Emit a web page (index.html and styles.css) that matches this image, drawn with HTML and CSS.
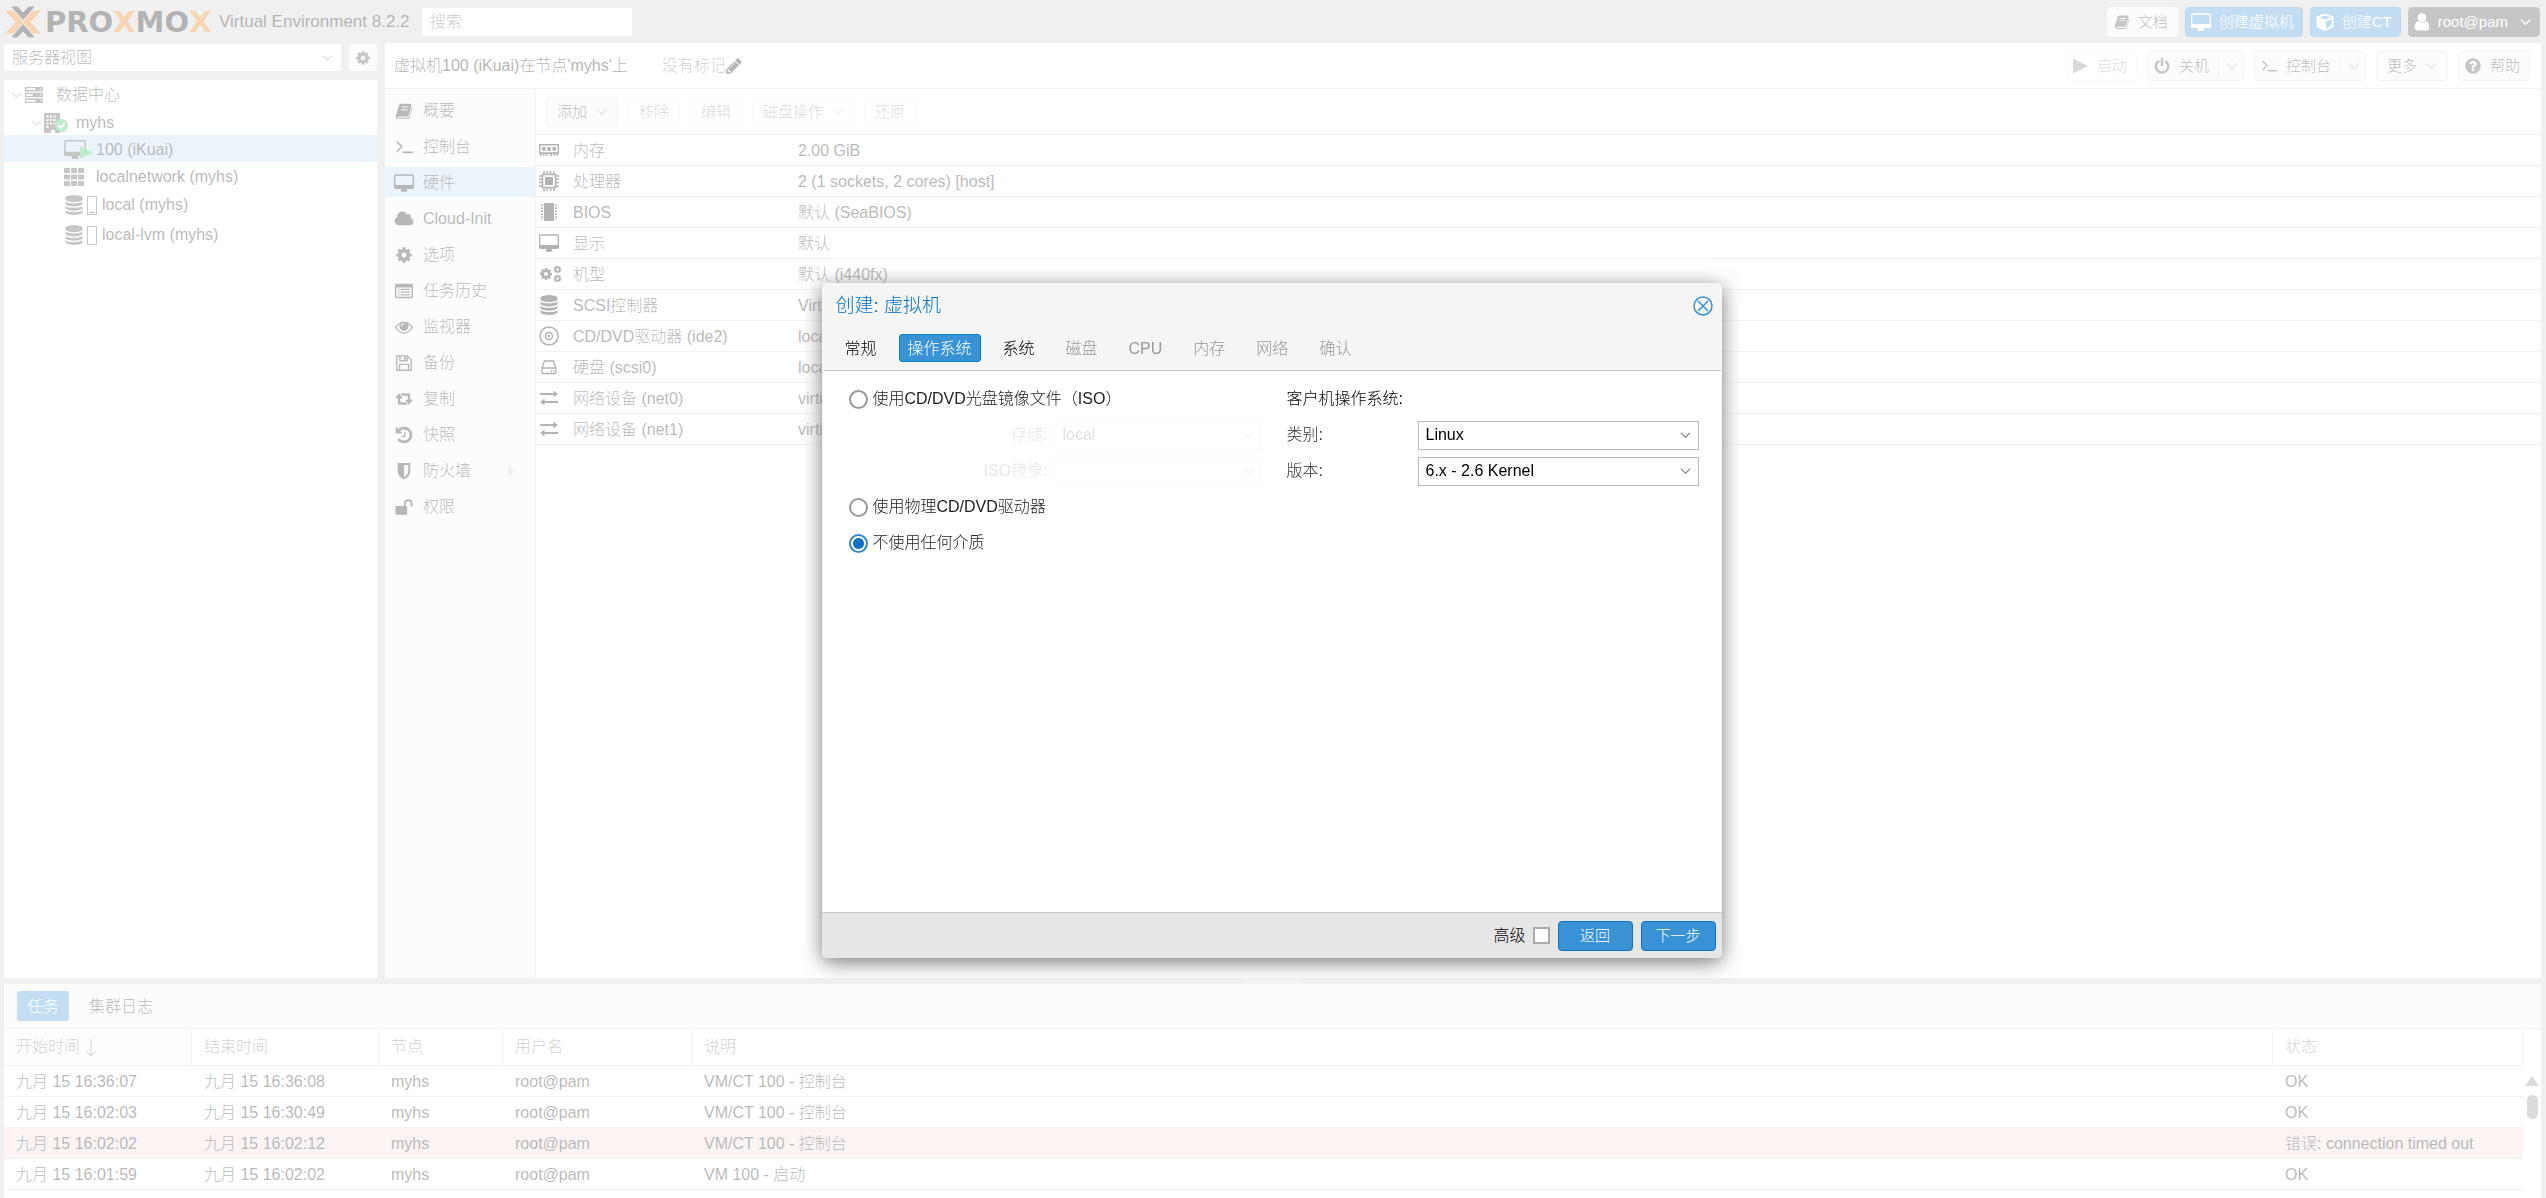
FILE: index.html
```html
<!DOCTYPE html>
<html lang="zh-CN">
<head>
<meta charset="utf-8">
<title>myhs - Proxmox Virtual Environment</title>
<link rel="stylesheet" href="styles.css">
</head>
<body>
<svg class="sprite" aria-hidden="true">
  <symbol id="logo" viewBox="0 0 36 32"><path fill="#e57000" d="M0 4.500h6.500q2 0 3.500 1.500l9 10-9 10q-1.500 1.500-3.500 1.500H0L10.500 16zM36 4.500h-6.500q-2 0-3.500 1.500l-9 10 9 10q1.500 1.500 3.500 1.500H36L25.500 16z"/><path d="M18 14.500 6 1q1-1 3-1h2q1.500 0 2.500 1L18 6l4.500-5q1-1 2.500-1h2q2 0 3 1zM18 17.500 6 31q1 1 3 1h2q1.500 0 2.500-1l4.500-5 4.500 5q1 1 2.500 1h2q2 0 3-1z" stroke="#cecece"/></symbol>
  <symbol id="cog" viewBox="0 0 1792 1792"><path d="M1152 896q0-106-75-181t-181-75-181 75-75 181 75 181 181 75 181-75 75-181zm512-109v222q0 12-8 23t-20 13l-185 28q-19 54-39 91 35 50 107 138 10 12 10 25t-9 23q-27 37-99 108t-94 71q-12 0-26-9l-138-108q-44 23-91 38-16 136-29 186-7 28-36 28h-222q-14 0-24.500-8.500t-11.500-21.500l-28-184q-49-16-90-37l-141 107q-10 9-25 9-14 0-25-11-126-114-165-168-7-10-7-23 0-12 8-23 15-21 51-66.500t54-70.500q-27-50-41-99l-183-27q-13-2-21-12.500t-8-23.500v-222q0-12 8-23t19-13l186-28q14-46 39-92-40-57-107-138-10-12-10-24 0-10 9-23 26-36 98.500-107.500t94.500-71.500q13 0 26 10l138 107q44-23 91-38 16-136 29-186 7-28 36-28h222q14 0 24.500 8.500t11.500 21.500l28 184q49 16 90 37l142-107q9-9 24-9 13 0 25 10 129 119 165 170 7 8 7 22 0 12-8 23-15 21-51 66.500t-54 70.500q26 50 41 98l183 28q13 2 21 12.500t8 23.500z"/></symbol>
  <symbol id="db" viewBox="0 0 1792 1792"><path d="M896 768q237 0 443-43t325-127v170q0 69-103 128t-280 93.500-385 34.500-385-34.500-280-93.500-103-128v-170q119 84 325 127t443 43zm0 768q237 0 443-43t325-127v170q0 69-103 128t-280 93.500-385 34.500-385-34.500-280-93.500-103-128v-170q119 84 325 127t443 43zm0-384q237 0 443-43t325-127v170q0 69-103 128t-280 93.500-385 34.500-385-34.500-280-93.500-103-128v-170q119 84 325 127t443 43zm0-1152q208 0 385 34.500t280 93.500 103 128v128q0 69-103 128t-280 93.500-385 34.500-385-34.500-280-93.500-103-128v-128q0-69 103-128t280-93.500 385-34.500z"/></symbol>
  <symbol id="user" viewBox="200 100 1400 1600"><path d="M1536 1399q0 109-62.500 187t-150.500 78h-854q-88 0-150.500-78t-62.500-187q0-85 8.500-160.500t31.500-152 58.500-131 94-89 134.500-34.500q131 128 313 128t313-128q76 0 134.500 34.500t94 89 58.500 131 31.500 152 8.500 160.500zm-256-887q0 159-112.500 271.500t-271.500 112.500-271.500-112.500-112.500-271.500 112.500-271.500 271.500-112.500 271.500 112.500 112.500 271.500z"/></symbol>
  <symbol id="power" viewBox="64 0 1664 1720"><path d="M1664 896q0 156-61 298t-164 245-245 164-298 61-298-61-245-164-164-245-61-298q0-182 80.500-343t226.500-270q43-32 95.500-25t83.500 50q32 42 24.500 94.500t-49.500 84.500q-98 74-151.500 181t-53.500 228q0 104 40.500 198.500t109.500 163.500 163.500 109.500 198.500 40.500 198.500-40.500 163.500-109.500 109.500-163.500 40.500-198.500q0-121-53.500-228t-151.500-181q-42-32-49.500-84.500t24.500-94.500q31-43 84-50t95 25q146 109 226.500 270t80.500 343zm-640-768v640q0 52-38 90t-90 38-90-38-38-90v-640q0-52 38-90t90-38 90 38 38 90z"/></symbol>
  <symbol id="help" viewBox="100 100 1592 1592"><path d="M1024 1376v-192q0-14-9-23t-23-9h-192q-14 0-23 9t-9 23v192q0 14 9 23t23 9h192q14 0 23-9t9-23zm256-672q0-88-55.500-163t-138.500-116-170-41q-243 0-371 213-15 24 8 42l132 100q7 6 19 6 16 0 25-12 53-68 86-92 34-24 86-24 48 0 85.500 26t37.500 59q0 38-20 61t-68 45q-63 28-115.500 86.500t-52.500 125.500v36q0 14 9 23t23 9h192q14 0 23-9t9-23q0-19 21.500-49.500t54.500-49.500q32-18 49-28.500t46-35 44.500-48 28-60.500 12.500-81zm384 192q0 209-103 385.500t-279.500 279.500-385.500 103-385.500-103-279.500-279.500-103-385.500 103-385.500 279.500-279.500 385.500-103 385.500 103 279.500 279.500 103 385.500z"/></symbol>
  <symbol id="cloud" viewBox="0 100 2048 1592"><path d="M1984 1152q0 159-112.500 271.500t-271.500 112.500h-1088q-185 0-316.500-131.500t-131.500-316.500q0-132 71-241.500t187-163.500q-2-28-2-43 0-212 150-362t362-150q158 0 286.500 88t187.500 230q70-62 166-62 106 0 181 75t75 181q0 75-41 138 129 30 213 134.500t84 239.500z"/></symbol>
  <symbol id="history" viewBox="64 64 1664 1664"><path d="M1664 896q0 156-61 298t-164 245-245 164-298 61q-172 0-327-72.500t-264-204.500q-7-10-6.500-22.500t8.500-20.500l137-138q10-9 25-9 16 2 23 12 73 95 179 147t225 52q104 0 198.500-40.500t163.500-109.500 109.500-163.500 40.500-198.500-40.500-198.500-109.500-163.500-163.500-109.500-198.500-40.500q-98 0-188 35.500t-160 101.500l137 138q31 30 14 69-17 40-59 40h-448q-26 0-45-19t-19-45v-448q0-42 40-59 39-17 69 14l130 129q107-101 244.500-156.500t284.500-55.500q156 0 298 61t245 164 164 245 61 298zm-640-288v448q0 14-9 23t-23 9h-320q-14 0-23-9t-9-23v-64q0-14 9-23t23-9h224v-352q0-14 9-23t23-9h64q14 0 23 9t9 23z"/></symbol>
  <symbol id="eye" viewBox="0 0 1792 1792"><path d="M1664 960q-152-236-381-353 61 104 61 225 0 185-131.500 316.500t-316.500 131.500-316.500-131.500-131.500-316.500q0-121 61-225-229 117-381 353 133 205 333.500 326.500t434.500 121.500 434.500-121.500 333.500-326.500zm-720-384q0-20-14-34t-34-14q-125 0-214.500 89.500t-89.500 214.500q0 20 14 34t34 14 34-14 14-34q0-86 61-147t147-61q20 0 34-14t14-34zm848 384q0 34-20 69-140 230-376.500 368.500t-499.500 138.500-499.500-139-376.500-368q-20-35-20-69t20-69q140-229 376.500-368t499.500-139 499.500 139 376.500 368q20 35 20 69z"/></symbol>
  <symbol id="pencil" viewBox="100 100 1592 1592"><path d="M491 1536l91-91-235-235-91 91v107h128v128h107zm523-928q0-22-22-22-10 0-17 7l-542 542q-7 7-7 17 0 22 22 22 10 0 17-7l542-542q7-7 7-17zm-54-192l416 416-832 832h-416v-416zm683 96q0 53-37 90l-166 166-416-416 166-165q36-38 90-38 53 0 91 38l235 234q37 39 37 91z"/></symbol>
  <symbol id="desktop" viewBox="-64 0 1920 1670"><path d="M1728 992v-832q0-13-9.500-22.500t-22.500-9.500h-1600q-13 0-22.500 9.500t-9.500 22.500v832q0 13 9.500 22.500t22.500 9.500h1600q13 0 22.500-9.500t9.500-22.500zm128-832v1088q0 66-47 113t-113 47h-544q0 37 16 77.500t32 71 16 43.500q0 26-19 45t-45 19h-512q-26 0-45-19t-19-45q0-14 16-44t32-70 16-78h-544q-66 0-113-47t-47-113v-1088q0-66 47-113t113-47h1600q66 0 113 47t47 113z"/></symbol>
  <symbol id="book" viewBox="0 0 20 20"><path fill-rule="evenodd" d="M6.500 2H17q1.400.2 1 1.700L15 15q-.4 1-1.500 1H3.800q-1 0-1 .7 0 .8 1.200.8h10q1 0 1.400-1L18.700 5q.8.600.5 1.700l-3 10.300q-.5 1.700-2.200 1.700H4Q1.800 18.700 1 17q-.4-1 0-2L4.500 4Q5 2 6.500 2zM7.600 5l-.4 1.200h7.500L15 5zM6.700 8l-.4 1.200h7.500l.4-1.200z"/></symbol>
  <symbol id="term" viewBox="0 0 20 20"><path fill="none" stroke="currentColor" stroke-width="1.800" d="m2 4 5.500 5.500L2 15M8.500 16H20"/></symbol>
  <symbol id="tasks" viewBox="0 0 20 20"><path fill-rule="evenodd" d="M2 2h16q2 0 2 2v12q0 2-2 2H2q-2 0-2-2V4q0-2 2-2zm-.5 4v9.500q0 1 1 1h15q1 0 1-1V6zM3.500 7.500H5V9H3.500zm3 0h10V9h-10zm-3 3H5V12H3.500zm3 0h10V12h-10zm-3 3H5V15H3.500zm3 0h10V15h-10z"/></symbol>
  <symbol id="floppy" viewBox="0 0 20 20"><path fill="none" stroke="currentColor" stroke-width="1.500" d="M2 2h11.500L18 6.500V18H2zM5.500 2v5.500h8V2M5 18v-6.500h10V18"/><path d="M10 3h2v3.500h-2z"/></symbol>
  <symbol id="retweet" viewBox="0 0 22 20"><path d="M5 3 10 9H6.500v5H13l2.500 3H5q-1.500 0-1.500-1.500V9H0zM17 17l-5-6h3.500V6H9L6.500 3H17q1.500 0 1.500 1.500V11H22z"/></symbol>
  <symbol id="shield" viewBox="0 0 20 20"><path fill-rule="evenodd" d="M3 1h14v9q0 6-7 9.500Q3 16 3 10zm7 2.300v13.500q4.700-2.600 4.700-7V3.300z"/></symbol>
  <symbol id="unlock" viewBox="0 0 20 20"><path d="M1 9h9V6q0-4.500 4.700-4.500T19.500 6v3.500h-2V6q0-2.500-2.800-2.500T12 6v3h.5q1 0 1 1v7.500q0 1-1 1H1.500q-1 0-1-1V10q0-1 .5-1z"/></symbol>
  <symbol id="memory" viewBox="0 0 20 20"><path fill-rule="evenodd" d="M0 4h20v10h-1v2h-1.500v-2H16v2h-1.500v-2H13v2h-1.500v-2h-3v2H7v-2H5.500v2H4v-2H2.500v2H1v-2H0zm1.500 1.500v6.700h17V5.500zM3 7h3.500v3.700H3zm5.300 0h3.400v3.700H8.300zm5.200 0H17v3.700h-3.500z"/></symbol>
  <symbol id="cpu" viewBox="0 0 20 20"><path fill="none" stroke="currentColor" stroke-width="1.500" d="M3.500 3.500h13v13h-13zM5 0v3M8.300 0v3M11.600 0v3M15 0v3M5 17v3M8.300 17v3M11.600 17v3M15 17v3M0 5h3M0 8.300h3M0 11.600h3M0 15h3M17 5h3M17 8.300h3M17 11.600h3M17 15h3"/><path d="M6 6h8v8H6z"/></symbol>
  <symbol id="chip" viewBox="0 0 20 20"><path d="M5 1h10v18H5z"/><path fill="none" stroke="currentColor" stroke-dasharray="1.500 1.500" stroke-width="2" d="M3 2.500V18M17 2.500V18"/></symbol>
  <symbol id="disc" viewBox="0 0 20 20"><g fill="none" stroke="currentColor" stroke-width="1.500"><circle cx="10" cy="10" r="9"/><circle cx="10" cy="10" r="3.500"/></g><circle cx="10" cy="10" r="1.200"/></symbol>
  <symbol id="hdd" viewBox="0 0 20 20"><path fill="none" stroke="currentColor" stroke-width="1.300" d="M3 11 5.500 4h9L17 11v4.500q0 1-1 1H4q-1 0-1-1zm0 0h14M11.500 14H13m1 0h1.500"/></symbol>
  <symbol id="exchange" viewBox="0 0 20 20"><path d="M1 5h13.500V2.500L19 6l-4.500 3.500V7H1zM19 13H5.500v-2.500L1 14l4.500 3.500V15H19z"/></symbol>
  <symbol id="server" viewBox="0 0 20 20"><path fill-rule="evenodd" d="M0 1h20v5H0zm1.500 1.500v2h10v-2zM0 7.500h20v5H0zM1.500 9v2h7V9zM0 14h20v5H0zm1.500 1.500v2h10v-2zM17 2.800v1.400h1.500V2.800zm0 6.500v1.400h1.500V9.300zm0 6.500v1.400h1.500v-1.400z"/></symbol>
  <symbol id="building" viewBox="0 0 16 20"><path fill-rule="evenodd" d="M0 0h16v20h-5v-3H7v3H0zM2.500 2.500v2h2v-2zm3.500 0v2h2v-2zm3.500 0v2h2v-2zM2.500 6v2h2V6zM6 6v2h2V6zm3.500 0v2h2V6zm-7 3.500v2h2v-2zm3.500 0v2h2v-2zm3.500 0v2h2v-2zM2.500 13v2h2v-2z"/></symbol>
  <symbol id="grid" viewBox="0 0 20 18"><path d="M0 1q0-1 1-1h4q1 0 1 1v3q0 1-1 1H1Q0 5 0 4zm7 0q0-1 1-1h4q1 0 1 1v3q0 1-1 1H8Q7 5 7 4zm7 0q0-1 1-1h4q1 0 1 1v3q0 1-1 1h-4q-1 0-1-1zM0 7.500q0-1 1-1h4q1 0 1 1v3q0 1-1 1H1q-1 0-1-1zm7 0q0-1 1-1h4q1 0 1 1v3q0 1-1 1H8q-1 0-1-1zm7 0q0-1 1-1h4q1 0 1 1v3q0 1-1 1h-4q-1 0-1-1zM0 14q0-1 1-1h4q1 0 1 1v3q0 1-1 1H1q-1 0-1-1zm7 0q0-1 1-1h4q1 0 1 1v3q0 1-1 1H8q-1 0-1-1zm7 0q0-1 1-1h4q1 0 1 1v3q0 1-1 1h-4q-1 0-1-1z"/></symbol>
  <symbol id="check" viewBox="0 0 14 14"><circle cx="7" cy="7" r="7" fill="#21bf4b"/><path d="m3.500 7 2.500 2.500L10.500 4.500" fill="none" stroke="#fff" stroke-width="2"/></symbol>
  <symbol id="play" viewBox="0 0 14 14"><path d="M0 0v14l14-7z"/></symbol>
  <symbol id="cube" viewBox="0 0 20 20"><path fill-rule="evenodd" d="M10 .5 19.500 4v11.500L10 20 .5 15.500V4zM10 2.500 3.500 5l6.500 2.500L16.500 5zM11 9.500v8l6.500-3.200V7z"/></symbol>
  <symbol id="chev" viewBox="0 0 12 12"><path fill="none" stroke="currentColor" stroke-width="1.500" d="m1 3.500 5 5 5-5"/></symbol>
  <symbol id="down" viewBox="0 0 12 18"><path fill="none" stroke="currentColor" d="M6 0v17M1 12l5 5 5-5"/></symbol>
  <symbol id="close" viewBox="0 0 20 20"><g fill="none" stroke="currentColor" stroke-width="1.500"><circle cx="10" cy="10" r="9"/><path d="m5 5 10 10M15 5 5 15"/></g></symbol>
</svg>

<div class="app">
  <header class="topbar">
    <svg class="mark"><use href="#logo"/></svg>
    <span class="wordmark">PRO<b>X</b>MO<b>X</b></span>
    <span class="product">Virtual Environment 8.2.2</span>
    <input class="search" type="text" placeholder="搜索" aria-label="搜索">
    <div class="top-actions">
      <button class="btn plain" type="button"><svg class="icon"><use href="#book"/></svg>文档</button>
      <button class="btn primary" type="button"><svg class="icon wide"><use href="#desktop"/></svg>创建虚拟机</button>
      <button class="btn primary" type="button"><svg class="icon cube"><use href="#cube"/></svg>创建CT</button>
      <button class="btn account" type="button"><svg class="icon"><use href="#user"/></svg>root@pam<svg class="chev"><use href="#chev"/></svg></button>
    </div>
  </header>

  <div class="workspace">
    <aside class="side">
      <div class="view-row">
        <div class="combo view"><select aria-label="视图"><option>服务器视图</option></select><svg class="chev"><use href="#chev"/></svg></div>
        <button class="gear" type="button" aria-label="设置"><svg class="icon"><use href="#cog"/></svg></button>
      </div>
      <ul class="tree">
        <li class="lvl0"><svg class="chev"><use href="#chev"/></svg><svg class="icon wide"><use href="#server"/></svg><span>数据中心</span></li>
        <li class="lvl1"><svg class="chev"><use href="#chev"/></svg><span class="stack"><svg class="house"><use href="#building"/></svg><svg class="badge"><use href="#check"/></svg></span><span>myhs</span></li>
        <li class="lvl2 selected"><span class="stack"><svg class="screen"><use href="#desktop"/></svg><svg class="badge run"><use href="#play"/></svg></span><span>100 (iKuai)</span></li>
        <li class="lvl2"><span class="stack"><svg class="icon wide"><use href="#grid"/></svg></span><span>localnetwork (myhs)</span></li>
        <li class="lvl2 store"><svg class="icon"><use href="#db"/></svg><i class="gauge low"></i><span>local (myhs)</span></li>
        <li class="lvl2 store"><svg class="icon"><use href="#db"/></svg><i class="gauge"></i><span>local-lvm (myhs)</span></li>
      </ul>
    </aside>

    <main class="content">
      <div class="content-head">
        <h1>虚拟机100 (iKuai)在节点'myhs'上</h1>
        <span class="tags">没有标记<svg class="pen"><use href="#pencil"/></svg></span>
        <div class="vm-actions">
          <button class="btn lead" type="button" disabled><svg class="tri"><use href="#play"/></svg>启动</button>
          <button class="btn lead split" type="button"><svg class="icon"><use href="#power"/></svg>关机<svg class="chev"><use href="#chev"/></svg></button>
          <button class="btn lead split" type="button"><svg class="icon"><use href="#term"/></svg>控制台<svg class="chev"><use href="#chev"/></svg></button>
          <button class="btn" type="button">更多<svg class="chev"><use href="#chev"/></svg></button>
          <button class="btn lead" type="button"><svg class="icon"><use href="#help"/></svg>帮助</button>
        </div>
      </div>
      <div class="content-body">
        <nav class="menu">
          <a href="#"><svg class="icon"><use href="#book"/></svg>概要</a>
          <a href="#"><svg class="icon"><use href="#term"/></svg>控制台</a>
          <a href="#" class="selected"><svg class="icon wide"><use href="#desktop"/></svg>硬件</a>
          <a href="#"><svg class="icon wide"><use href="#cloud"/></svg>Cloud-Init</a>
          <a href="#"><svg class="icon"><use href="#cog"/></svg>选项</a>
          <a href="#"><svg class="icon"><use href="#tasks"/></svg>任务历史</a>
          <a href="#"><svg class="icon"><use href="#eye"/></svg>监视器</a>
          <a href="#"><svg class="icon"><use href="#floppy"/></svg>备份</a>
          <a href="#"><svg class="icon"><use href="#retweet"/></svg>复制</a>
          <a href="#"><svg class="icon"><use href="#history"/></svg>快照</a>
          <a href="#"><svg class="icon"><use href="#shield"/></svg>防火墙<svg class="more" viewBox="0 0 7 12"><path d="M0 0v12l7-6z"/></svg></a>
          <a href="#"><svg class="icon"><use href="#unlock"/></svg>权限</a>
        </nav>
        <section class="hardware">
          <div class="toolbar">
            <button class="btn" type="button">添加<svg class="chev"><use href="#chev"/></svg></button>
            <button class="btn" type="button" disabled>移除</button>
            <button class="btn" type="button" disabled>编辑</button>
            <button class="btn" type="button" disabled>磁盘操作<svg class="chev"><use href="#chev"/></svg></button>
            <button class="btn" type="button" disabled>还原</button>
          </div>
          <table class="hw">
            <tr><td class="ic"><svg class="icon"><use href="#memory"/></svg></td><td class="nm">内存</td><td>2.00 GiB</td></tr>
            <tr><td class="ic"><svg class="icon"><use href="#cpu"/></svg></td><td class="nm">处理器</td><td>2 (1 sockets, 2 cores) [host]</td></tr>
            <tr><td class="ic"><svg class="icon"><use href="#chip"/></svg></td><td class="nm">BIOS</td><td>默认 (SeaBIOS)</td></tr>
            <tr><td class="ic"><svg class="icon"><use href="#desktop"/></svg></td><td class="nm">显示</td><td>默认</td></tr>
            <tr><td class="ic"><span class="cogs"><svg><use href="#cog"/></svg><span><svg><use href="#cog"/></svg><svg><use href="#cog"/></svg></span></span></td><td class="nm">机型</td><td>默认 (i440fx)</td></tr>
            <tr><td class="ic"><svg class="icon"><use href="#db"/></svg></td><td class="nm">SCSI控制器</td><td>VirtIO</td></tr>
            <tr><td class="ic"><svg class="icon"><use href="#disc"/></svg></td><td class="nm">CD/DVD驱动器 (ide2)</td><td>local</td></tr>
            <tr><td class="ic"><svg class="icon"><use href="#hdd"/></svg></td><td class="nm">硬盘 (scsi0)</td><td>local</td></tr>
            <tr><td class="ic"><svg class="icon"><use href="#exchange"/></svg></td><td class="nm">网络设备 (net0)</td><td>virtio</td></tr>
            <tr><td class="ic"><svg class="icon"><use href="#exchange"/></svg></td><td class="nm">网络设备 (net1)</td><td>virtio</td></tr>
          </table>
        </section>
      </div>
    </main>
  </div>

  <div class="splitter"><span></span></div>

  <section class="log">
    <div class="log-tabs">
      <button type="button" class="active">任务</button>
      <button type="button">集群日志</button>
    </div>
    <div class="log-body">
      <table class="tasks">
        <colgroup><col class="c-start"><col class="c-end"><col class="c-node"><col class="c-user"><col><col class="c-status"></colgroup>
        <thead><tr><th class="sorted">开始时间<svg class="sort"><use href="#down"/></svg></th><th>结束时间</th><th>节点</th><th>用户名</th><th>说明</th><th>状态</th></tr></thead>
        <tbody>
          <tr><td>九月 15 16:36:07</td><td>九月 15 16:36:08</td><td>myhs</td><td>root@pam</td><td>VM/CT 100 - 控制台</td><td>OK</td></tr>
          <tr><td>九月 15 16:02:03</td><td>九月 15 16:30:49</td><td>myhs</td><td>root@pam</td><td>VM/CT 100 - 控制台</td><td>OK</td></tr>
          <tr class="error"><td>九月 15 16:02:02</td><td>九月 15 16:02:12</td><td>myhs</td><td>root@pam</td><td>VM/CT 100 - 控制台</td><td>错误: connection timed out</td></tr>
          <tr><td>九月 15 16:01:59</td><td>九月 15 16:02:02</td><td>myhs</td><td>root@pam</td><td>VM 100 - 启动</td><td>OK</td></tr>
        </tbody>
      </table>
      <div class="scroll"><i class="up"></i><i class="thumb"></i></div>
    </div>
  </section>
</div>

<div class="mask">
  <form class="dialog" role="dialog" aria-labelledby="dlg-title">
    <div class="dlg-head">
      <h2 id="dlg-title">创建: 虚拟机</h2>
      <button class="close" type="button" aria-label="关闭"><svg><use href="#close"/></svg></button>
    </div>
    <div class="dlg-tabs">
      <button type="button">常规</button>
      <button type="button" class="active">操作系统</button>
      <button type="button">系统</button>
      <button type="button" disabled>磁盘</button>
      <button type="button" disabled>CPU</button>
      <button type="button" disabled>内存</button>
      <button type="button" disabled>网络</button>
      <button type="button" disabled>确认</button>
    </div>
    <div class="dlg-body">
      <div class="col">
        <label class="radio"><input type="radio" name="media">使用CD/DVD光盘镜像文件（ISO）</label>
        <div class="field off"><label for="store">存储:</label><div class="combo"><select id="store" disabled><option>local</option></select><svg class="chev"><use href="#chev"/></svg></div></div>
        <div class="field off"><label for="iso">ISO镜像:</label><div class="combo"><select id="iso" disabled><option></option></select><svg class="chev"><use href="#chev"/></svg></div></div>
        <label class="radio"><input type="radio" name="media">使用物理CD/DVD驱动器</label>
        <label class="radio"><input type="radio" name="media" checked>不使用任何介质</label>
      </div>
      <div class="col">
        <div class="caption">客户机操作系统:</div>
        <div class="field"><label for="ostype">类别:</label><div class="combo"><select id="ostype"><option>Linux</option></select><svg class="chev"><use href="#chev"/></svg></div></div>
        <div class="field"><label for="osver">版本:</label><div class="combo"><select id="osver"><option>6.x - 2.6 Kernel</option></select><svg class="chev"><use href="#chev"/></svg></div></div>
      </div>
    </div>
    <div class="dlg-foot">
      <label>高级<input type="checkbox"></label>
      <button type="button">返回</button>
      <button type="button">下一步</button>
    </div>
  </form>
</div>
</body>
</html>
```
FILE: styles.css
```css
* { box-sizing: border-box; }

body {
  margin: 0;
  background: #cecece;
  color: #000;
  font: 300 16px/20px "Liberation Sans", "Noto Sans CJK SC", sans-serif;
  overflow: hidden;
}

button, input, select { font: inherit; color: inherit; margin: 0; }
ul { margin: 0; padding: 0; list-style: none; }
svg { display: block; flex: none; fill: currentColor; }
.sprite { position: absolute; width: 0; height: 0; }

.icon { width: 16px; height: 18px; }
.icon.wide { width: 20px; height: 18px; }
.chev { width: 11px; height: 12px; color: #999; }

.app { display: flex; flex-direction: column; height: 100vh; }

/* top bar */
.topbar { display: flex; align-items: center; height: 43px; padding: 0 6px 0 5px; flex: none; }
.mark { width: 36px; height: 32px; }
.wordmark { margin-left: 4px; width: 174px; font: bold 29px/32px "DejaVu Sans", sans-serif; }
.wordmark b { color: #e57000; }
.product { width: 195px; font-size: 17px; white-space: nowrap; }
.search { margin-left: 8px; width: 210px; height: 28px; padding: 0 8px; border: 0; background: #fff; }
.search::placeholder { color: #555; opacity: 1; }
.top-actions { display: flex; gap: 7px; margin-left: auto; }

.btn {
  display: flex; align-items: center; gap: 9px;
  height: 30px; padding: 0 10px;
  border: 1px solid #d8d8d8; border-radius: 4px;
  background: #f5f5f5; color: #222; font-size: 15px; white-space: nowrap;
}
.btn:disabled { opacity: .5; background: #fff; color: #000; }
.btn .icon { color: #404040; }
.btn .chev { color: #aaa; }
.btn.lead { padding: 0 9px 0 6px; }
.btn.split { padding-right: 5px; }
.btn.plain { border-color: #f5f5f5; }
.top-actions .btn { gap: 8px; padding: 0 8px 0 5px; }
.top-actions .btn.plain { padding: 0 9px 0 6px; }
.btn.primary { background: #3892d4; border-color: #2080cc; color: #fff; }
.btn.account { background: #404040; border-color: #505050; color: #fff; }
.btn.primary .icon, .btn.account .icon, .btn.account .chev { color: #fff; }
.btn.account .chev { margin-left: 4px; }
.icon.cube { width: 18px; }
.tri { width: 15px; height: 16px; }
.split .chev { border-left: 1px solid #d8d8d8; width: 20px; height: 20px; padding-left: 7px; }

/* tree */
.workspace { display: flex; gap: 8px; flex: 1; min-height: 0; padding: 0 5px 0 4px; }
.side { display: flex; flex-direction: column; width: 373px; flex: none; }
.view-row { display: flex; gap: 8px; padding: 1px 0 9px; }
.combo { display: grid; align-items: center; }
.combo select, .combo .chev { grid-area: 1 / 1; }
.combo select { appearance: none; width: 100%; border: 1px solid #bbb; border-radius: 0; background: #fff; outline: 0; opacity: 1; }
.combo .chev { justify-self: end; margin-right: 8px; pointer-events: none; }
.view { flex: 1; }
.view select { height: 27px; border: 0; padding: 0 8px; color: #222; }
.gear { display: grid; place-items: center; width: 28px; height: 27px; padding: 0; border: 0; border-radius: 3px; background: #f5f5f5; color: #404040; }
.tree { flex: 1; background: #fff; color: #111; }
.tree li { display: flex; align-items: center; height: 27px; padding-top: 2px; }
.tree .lvl0 { padding-left: 7px; height: 28px; }
.tree .lvl0 .icon, .tree .store .icon { color: #404040; }
.tree .lvl0 .chev, .tree .lvl1 .chev { margin-right: 2px; color: #aaa; }
.tree .lvl0 .icon { margin-right: 12px; }
.tree .lvl1 { padding-left: 27px; }
.tree .lvl2 { padding-left: 60px; }
.tree .selected { background: #bcd9f0; }
.tree .store { height: 30px; }
.tree .store .icon { width: 20px; height: 20px; }
.stack { position: relative; width: 32px; color: #404040; }
.screen { width: 22px; height: 19px; }
.house { width: 16px; height: 20px; }
.badge { position: absolute; left: 11px; top: 6px; width: 13px; height: 13px; }
.badge.run { left: 16px; top: 6px; color: #21bf4b; }
.gauge { width: 10px; height: 19px; margin: 0 5px 0 3px; border: 1px solid #444; display: flex; align-items: flex-end; }
.gauge.low::after { content: ""; flex: 1; height: 1px; margin: 1px; background: #444; }

/* content */
.content { display: flex; flex-direction: column; flex: 1; min-width: 0; background: #fff; }
.content-head { display: flex; align-items: center; height: 46px; padding: 0 11px 0 9px; border-bottom: 1px solid #cfcfcf; }
.content-head h1 { margin: 0; font: inherit; }
.tags { display: flex; align-items: center; margin-left: 34px; color: #666; }
.pen { width: 16px; height: 16px; color: #000; }
.vm-actions { display: flex; gap: 10px; margin-left: auto; }
.content-body { display: flex; flex: 1; min-height: 0; }
.menu { display: flex; flex-direction: column; gap: 6px; width: 151px; padding-top: 6px; border-right: 1px solid #cfcfcf; background: #f5f5f5; }
.menu a { display: grid; grid-template-columns: 20px 1fr auto; gap: 9px; align-items: center; height: 30px; padding: 2px 20px 0 9px; color: #111; text-decoration: none; }
.menu a > .icon { justify-self: center; width: 18px; }
.menu a > .icon.wide { width: 20px; }
.menu .selected { background: #bcd9f0; }
.more { width: 7px; height: 12px; color: #ccc; }
.hardware { flex: 1; min-width: 0; }
.toolbar { display: flex; align-items: center; gap: 10px; height: 46px; padding: 0 10px; border-bottom: 1px solid #cfcfcf; }
.hw { width: 100%; border-collapse: separate; border-spacing: 0; }
.hw td { height: 31px; padding: 2px 0 0; border-bottom: 1px solid #cfcfcf; color: #111; }
.hw .ic { width: 37px; padding: 0 0 0 3px; color: #000; }
.hw .ic .icon { width: 20px; height: 20px; }
.hw .nm { width: 225px; }
.cogs { display: flex; align-items: center; }
.cogs svg { width: 14px; height: 14px; }
.cogs span svg { width: 9px; height: 9px; }

/* bottom log */
.splitter { display: flex; justify-content: center; height: 6px; flex: none; }
.splitter span { width: 60px; background: #dedede; }
.log { height: 214px; flex: none; margin: 0 5px 0 4px; background: #fff; overflow: hidden; }
.log-tabs { display: flex; gap: 10px; height: 45px; padding: 7px 13px; background: #f5f5f5; border-bottom: 1px solid #cfcfcf; }
.log-tabs button { height: 30px; padding: 1px 10px 0; border: 0; border-radius: 3px; background: none; color: #111; }
.log-tabs button.active { background: #3892d4; color: #fff; }
.log-body { display: flex; }
.tasks { flex: 1; table-layout: fixed; border-collapse: separate; border-spacing: 0; color: #111; }
.tasks th { height: 37px; padding: 0 12px; text-align: left; font-weight: 300; color: #666; border-right: 1px solid #cfcfcf; border-bottom: 1px solid #cfcfcf; }
.tasks th.sorted { background: #f5f8fd; }
.tasks td { height: 31px; padding: 2px 12px 0; border-bottom: 1px solid #cfcfcf; white-space: nowrap; }
.tasks .error td { background: #f3d6d7; }
.sort { display: inline-block; width: 12px; height: 18px; margin-left: 5px; vertical-align: middle; }
.c-start { width: 188px; }
.c-end { width: 187px; }
.c-node { width: 124px; }
.c-user { width: 189px; }
.c-status { width: 250px; }
.scroll { display: flex; flex-direction: column; align-items: center; gap: 9px; width: 18px; padding-top: 47px; }
.up { border: 7px solid transparent; border-top: 0; border-bottom: 10px solid #888; }
.thumb { width: 11px; height: 24px; border-radius: 6px; background: #888; }

/* dialog */
.mask { position: fixed; inset: 0; display: flex; align-items: center; justify-content: center; padding: 43px 3px 0 0; background: rgba(255, 255, 255, .7); }
.dialog { display: flex; flex-direction: column; width: 900px; height: 675px; border-radius: 5px; background: #f5f5f5; box-shadow: 0 4px 20px #777; overflow: hidden; }
.dlg-head { display: flex; align-items: center; justify-content: space-between; height: 45px; padding: 0 9px 0 14px; }
.dlg-head h2 { margin: 0; font: 300 19px/24px "Liberation Sans", "Noto Sans CJK SC", sans-serif; color: #0070c8; }
.close { padding: 0; border: 0; background: none; color: #3892d4; }
.close svg { width: 20px; height: 20px; }
.dlg-tabs { display: flex; gap: 13px; height: 42px; padding: 6px 14px 0; }
.dlg-tabs button { height: 28px; padding: 1px 8px 0; border: 1px solid transparent; border-radius: 3px; background: none; }
.dlg-tabs .active { background: #3892d4; border-color: #0c80d0; color: #fff; }
.dlg-tabs :disabled { color: #999; }
.dlg-body { flex: 1; display: grid; grid-template-columns: 413px 412px; gap: 25px; margin: 0 1px; padding: 10px 22px 0 26px; border-top: 1px solid #c8c8c8; background: #fff; }
.dlg-body .col { display: flex; flex-direction: column; }
.radio, .caption, .field { display: flex; align-items: center; height: 36px; }
.radio { gap: 5px; color: #222; }
.radio input { appearance: none; width: 19px; height: 19px; border: 2px solid #999; border-radius: 50%; background: #fff; }
.radio input:checked { border-color: #3a88cc; background: radial-gradient(#1272c8 0 5px, #fff 6px); }
.field label { width: 131px; color: #333; }
.field .combo { flex: 1; }
.field select { height: 29px; padding: 0 7px; color: #000; }
.off { opacity: .12; }
.off select { border-color: #ddd; }
.off label { width: 199px; margin-right: 7px; text-align: right; }
.dlg-foot { display: flex; align-items: center; justify-content: flex-end; gap: 8px; height: 46px; padding: 0 6px 0; border-top: 1px solid #c8c8c8; background: #e6e6e6; font-size: 15px; }
.dlg-foot label { display: flex; align-items: center; gap: 7px; font-size: 16px; }
.dlg-foot input { appearance: none; width: 17px; height: 17px; border: 2px solid #aaa; background: #fff; }
.dlg-foot button { width: 75px; height: 30px; border: 1px solid #0c70c8; border-radius: 4px; background: #3892d4; color: #fff; }
```
